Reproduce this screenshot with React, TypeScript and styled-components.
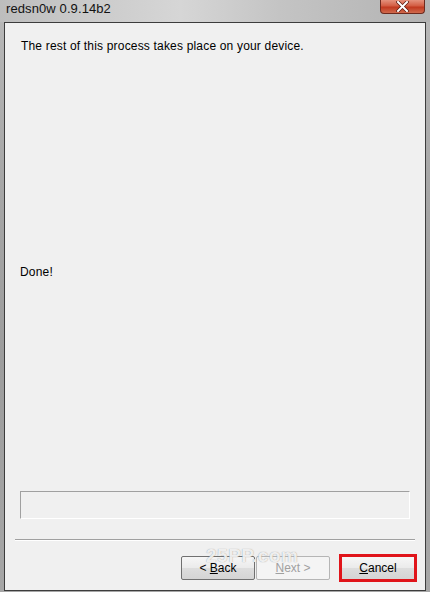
import React from 'react';
import styled, { createGlobalStyle } from 'styled-components';

const GlobalStyle = createGlobalStyle`
  html, body {
    margin: 0;
    padding: 0;
    background: #a9a9a9;
  }
  body {
    font-family: "Segoe UI", "Liberation Sans", Arial, sans-serif;
  }
`;

const Frame = styled.div`
  width: 430px;
  height: 592px;
  box-sizing: border-box;
  display: flex;
  flex-direction: column;
  padding: 0 4px 1px 4px;
  background: linear-gradient(
    to bottom,
    #b9b9b9 0%,
    #a7a7a7 30%,
    #9d9d9d 60%,
    #a6a6a6 100%
  );
  overflow: hidden;
`;

const TitleBar = styled.div`
  height: 22px;
  margin: 0 -4px;
  padding: 0 5px 0 6px;
  display: flex;
  align-items: flex-start;
  justify-content: space-between;
  background: linear-gradient(
    to right,
    #bdbdbd 0%,
    #c9c9c9 18%,
    #d6d6d6 42%,
    #c4c4c4 65%,
    #b3b3b3 100%
  );
`;

const Title = styled.span`
  font-size: 13px;
  line-height: 18px;
  color: #111;
  letter-spacing: 0.1px;
`;

const CloseButton = styled.div`
  width: 45px;
  height: 14px;
  box-sizing: border-box;
  border: 1px solid #6d2a1e;
  border-top: none;
  border-radius: 0 0 4px 4px;
  background: linear-gradient(to bottom, #e4917c 0%, #d35d43 45%, #c1391f 55%, #d06a4d 100%);
  display: flex;
  align-items: center;
  justify-content: center;
`;

const Client = styled.div`
  flex: 1;
  display: flex;
  flex-direction: column;
  border: 1px solid #3c3c3c;
  background: #f0f0f0;
  position: relative;
`;

const Message = styled.div`
  margin: 15px 16px 0 16px;
  font-size: 12px;
  line-height: 16px;
  letter-spacing: 0.18px;
  color: #000;
`;

const Status = styled(Message)`
  margin-top: 210px;
  margin-left: 15px;
`;

const ProgressBox = styled.div`
  margin: 211px 15px 0 15px;
  height: 28px;
  box-sizing: border-box;
  border-top: 1px solid #a0a0a0;
  border-left: 1px solid #a0a0a0;
  border-right: 1px solid #ffffff;
  border-bottom: 1px solid #ffffff;
  background: #f0f0f0;
`;

const Separator = styled.div`
  margin: 20px 10px 0 10px;
  height: 0;
  border-top: 1px solid #a0a0a0;
  border-bottom: 1px solid #ffffff;
`;

const ButtonRow = styled.div`
  margin: 15px 0 0 0;
  padding-right: 10px;
  display: flex;
  justify-content: flex-end;
  align-items: center;
  position: relative;
`;

const Button = styled.div<{ $disabled?: boolean; $highlight?: boolean }>`
  width: 74px;
  height: 24px;
  box-sizing: border-box;
  border: 1px solid ${p => (p.$disabled ? '#b5b5b5' : '#707070')};
  border-radius: ${p => (p.$highlight ? '0' : '2px')};
  background: ${p =>
    p.$disabled
      ? '#f4f4f4'
      : 'linear-gradient(to bottom, #f6f6f6 0%, #ebebeb 48%, #dddddd 52%, #d4d4d4 100%)'};
  display: flex;
  align-items: center;
  justify-content: center;
  font-size: 12px;
  color: ${p => (p.$disabled ? '#a0a0a0' : '#000')};
  outline: ${p => (p.$highlight ? '3px solid #e0141a' : 'none')};
  outline-offset: -1px;
  margin-left: ${p => (p.$highlight ? '11px' : '1px')};

  u {
    text-decoration: underline;
    text-underline-offset: 1px;
  }
`;

const Watermark = styled.span`
  position: absolute;
  left: 201px;
  top: -9px;
  font-family: "Liberation Sans", Arial, sans-serif;
  font-size: 19px;
  line-height: 17px;
  font-weight: bold;
  letter-spacing: 0.5px;
  color: rgba(255, 255, 255, 0.85);
  text-shadow: 0 0 1px rgba(110, 110, 110, 0.75);
  pointer-events: none;
`;

const App: React.FC = () => {
  return (
    <>
      <GlobalStyle />
      <Frame>
        <TitleBar>
          <Title>redsn0w 0.9.14b2</Title>
          <CloseButton>
            <svg width="13" height="11" viewBox="0 0 13 11">
              <path d="M2 1 L11 10 M11 1 L2 10" stroke="#5a1a10" strokeWidth="3.4" strokeLinecap="square" />
              <path d="M2 1 L11 10 M11 1 L2 10" stroke="#ffffff" strokeWidth="2" strokeLinecap="square" />
            </svg>
          </CloseButton>
        </TitleBar>
        <Client>
          <Message>The rest of this process takes place on your device.</Message>
          <Status>Done!</Status>
          <ProgressBox />
          <Separator />
          <ButtonRow>
            <Button>
              &lt;&nbsp;<u>B</u>ack
            </Button>
            <Button $disabled>
              <u>N</u>ext &gt;
            </Button>
            <Button $highlight>
              <u>C</u>ancel
            </Button>
            <Watermark>25PP.com</Watermark>
          </ButtonRow>
        </Client>
      </Frame>
    </>
  );
};

export default App;
